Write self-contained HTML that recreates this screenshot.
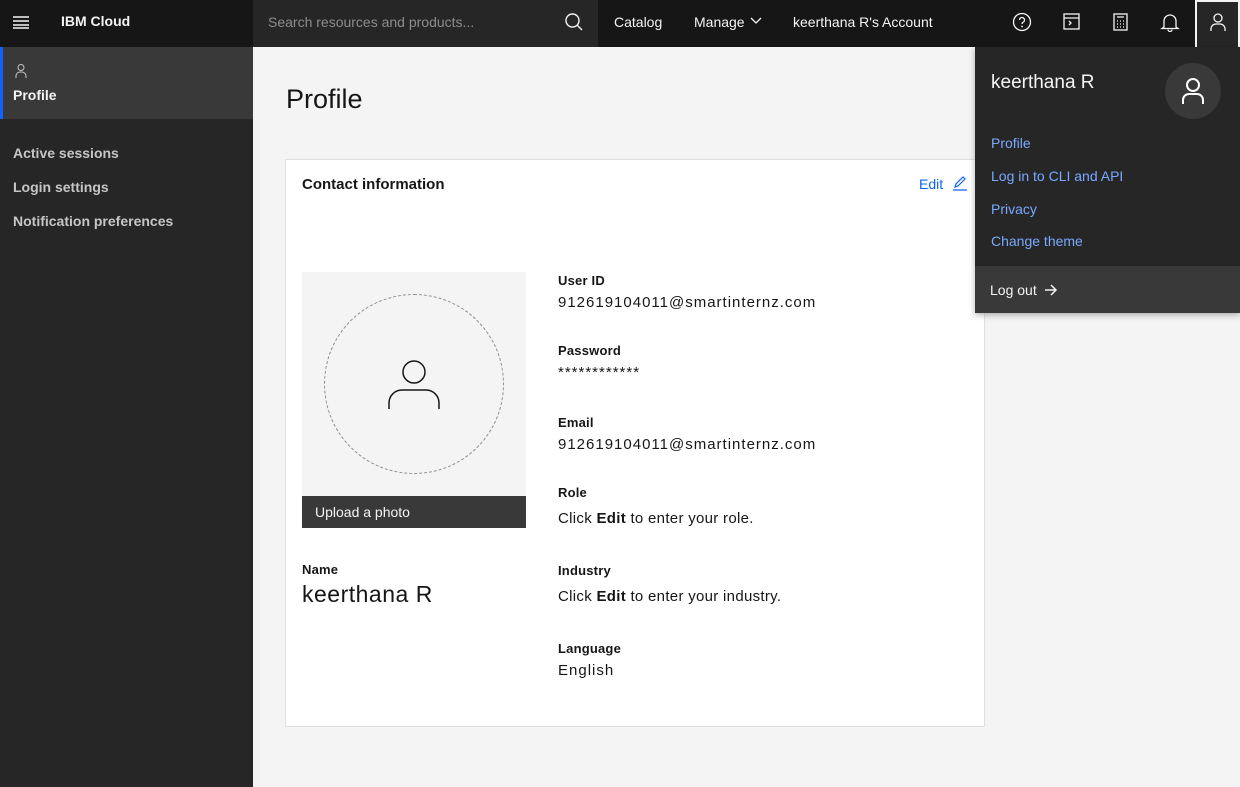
<!DOCTYPE html>
<html><head><meta charset="utf-8"><style>
*{margin:0;padding:0;box-sizing:border-box}
body{width:1240px;height:787px;overflow:hidden;font-family:"Liberation Sans",sans-serif;background:#f4f4f4;position:relative;color:#161616}
.a{position:absolute}
.hdr{left:0;top:0;width:1240px;height:47px;background:#161616}
.w{color:#f4f4f4;font-size:14px}
.side{left:0;top:47px;width:253px;height:740px;background:#262626}
.lbl{font-size:13px;font-weight:bold;color:#161616;letter-spacing:.2px}
.val{font-size:15px;color:#161616;letter-spacing:1px}
.lnk{color:#78a9ff;font-size:14px;left:991px}
</style></head><body>
<div class="a hdr"></div>
<svg class="a" style="left:12px;top:14px" width="18" height="16"><path d="M1 3h16M1 7h16M1 11h16M1 14h16" stroke="#f4f4f4" stroke-width="1.5"/></svg>
<div class="a w" style="left:61px;top:13px;font-weight:bold">IBM Cloud</div>
<div class="a" style="left:253px;top:0;width:345px;height:47px;background:#262626"></div>
<div class="a" style="left:268px;top:14px;color:#8d8d8d;font-size:14px">Search resources and products...</div>
<svg class="a" style="left:564px;top:12px" width="20" height="20"><circle cx="8.5" cy="8.5" r="6.5" stroke="#f4f4f4" fill="none" stroke-width="1.4"/><path d="M13 13l5 5" stroke="#f4f4f4" stroke-width="1.4"/></svg>
<div class="a w" style="left:614px;top:14px">Catalog</div>
<div class="a w" style="left:694px;top:14px">Manage</div>
<svg class="a" style="left:750px;top:17px" width="12" height="8"><path d="M1 1l5 5 5-5" stroke="#f4f4f4" fill="none" stroke-width="1.3"/></svg>
<div class="a w" style="left:793px;top:14px">keerthana R's Account</div>
<svg class="a" style="left:1012px;top:12px" width="20" height="20"><circle cx="10" cy="10" r="8.5" stroke="#f4f4f4" fill="none" stroke-width="1.3"/><path d="M7.5 8a2.5 2.5 0 1 1 3.5 2.3c-.8.4-1 .9-1 1.7" stroke="#f4f4f4" fill="none" stroke-width="1.3"/><circle cx="10" cy="14.5" r=".9" fill="#f4f4f4"/></svg>
<svg class="a" style="left:1063px;top:13px" width="18" height="18"><rect x="1" y="1" width="15" height="15" stroke="#f4f4f4" fill="none" stroke-width="1.3"/><path d="M1 5h15M6 8l2 2-2 2" stroke="#f4f4f4" fill="none" stroke-width="1.3"/></svg>
<svg class="a" style="left:1113px;top:13px" width="16" height="18"><rect x="1" y="1" width="13" height="16" stroke="#f4f4f4" fill="none" stroke-width="1.3"/><path d="M4 4h7M4 8h1M7 8h1M10 8h1M4 11h1M7 11h1M10 11h1M4 14h1M7 14h1M10 14h1" stroke="#f4f4f4" stroke-width="1.2"/></svg>
<svg class="a" style="left:1160px;top:12px" width="20" height="20"><path d="M4 15V9a6 6 0 0 1 12 0v6l2 1.5H2z M8 17.5a2 2 0 0 0 4 0" stroke="#f4f4f4" fill="none" stroke-width="1.3"/></svg>
<div class="a" style="left:1195px;top:0;width:45px;height:47px;background:#262626;border:2px solid #f4f4f4;border-bottom:none"></div>
<svg class="a" style="left:1209px;top:12px" width="18" height="20"><circle cx="9" cy="6" r="4" stroke="#f4f4f4" fill="none" stroke-width="1.3"/><path d="M2 19v-2a5 5 0 0 1 5-5h4a5 5 0 0 1 5 5v2" stroke="#f4f4f4" fill="none" stroke-width="1.3"/></svg>

<div class="a side"></div>
<div class="a" style="left:0;top:47px;width:253px;height:72px;background:#393939;border-left:3px solid #0f62fe"></div>
<svg class="a" style="left:14px;top:63px" width="14" height="16"><circle cx="7" cy="4.5" r="3" stroke="#c6c6c6" fill="none" stroke-width="1"/><path d="M2 15v-2a4 4 0 0 1 4-4h2a4 4 0 0 1 4 4v2" stroke="#c6c6c6" fill="none"/></svg>
<div class="a w" style="left:13px;top:87px;font-weight:bold">Profile</div>
<div class="a" style="left:13px;top:145px;color:#c6c6c6;font-size:14px;font-weight:bold">Active sessions</div>
<div class="a" style="left:13px;top:179px;color:#c6c6c6;font-size:14px;font-weight:bold">Login settings</div>
<div class="a" style="left:13px;top:213px;color:#c6c6c6;font-size:14px;font-weight:bold">Notification preferences</div>

<div class="a" style="left:286px;top:84px;font-size:27px;color:#161616">Profile</div>
<div class="a" style="left:285px;top:159px;width:700px;height:568px;background:#fff;border:1px solid #e0e0e0"></div>
<div class="a" style="left:302px;top:176px;font-size:15px;font-weight:bold">Contact information</div>
<div class="a" style="left:919px;top:176px;font-size:14px;color:#0f62fe">Edit</div>
<svg class="a" style="left:952px;top:175px" width="16" height="16"><path d="M3 12l1-3 7-7 2 2-7 7z M1 15h14" stroke="#0f62fe" fill="none" stroke-width="1.2"/></svg>
<div class="a" style="left:302px;top:272px;width:224px;height:224px;background:#f4f4f4"></div>
<div class="a" style="left:324px;top:294px;width:180px;height:180px;border:1.5px dashed #8d8d8d;border-radius:50%"></div>
<svg class="a" style="left:387px;top:357px" width="54" height="54"><circle cx="27" cy="15" r="11" stroke="#161616" fill="none" stroke-width="1.5"/><path d="M2 52v-6a13 13 0 0 1 13-13h24a13 13 0 0 1 13 13v6" stroke="#161616" fill="none" stroke-width="1.5"/></svg>
<div class="a" style="left:302px;top:496px;width:224px;height:32px;background:#393939"></div>
<div class="a w" style="left:315px;top:504px">Upload a photo</div>
<div class="a lbl" style="left:302px;top:562px">Name</div>
<div class="a" style="left:302px;top:581px;font-size:23px;letter-spacing:.5px">keerthana R</div>
<div class="a lbl" style="left:558px;top:273px">User ID</div>
<div class="a val" style="left:558px;top:294px">912619104011@smartinternz.com</div>
<div class="a lbl" style="left:558px;top:343px">Password</div>
<div class="a val" style="left:558px;top:364px">************</div>
<div class="a lbl" style="left:558px;top:415px">Email</div>
<div class="a val" style="left:558px;top:436px">912619104011@smartinternz.com</div>
<div class="a lbl" style="left:558px;top:485px">Role</div>
<div class="a val" style="left:558px;top:510px;letter-spacing:.3px">Click <b>Edit</b> to enter your role.</div>
<div class="a lbl" style="left:558px;top:563px">Industry</div>
<div class="a val" style="left:558px;top:588px;letter-spacing:.3px">Click <b>Edit</b> to enter your industry.</div>
<div class="a lbl" style="left:558px;top:641px">Language</div>
<div class="a val" style="left:558px;top:662px">English</div>

<div class="a" style="left:975px;top:47px;width:265px;height:266px;background:#262626;box-shadow:0 2px 6px rgba(0,0,0,.3)"></div>
<div class="a" style="left:991px;top:72px;font-size:19px;color:#f4f4f4">keerthana R</div>
<div class="a" style="left:1165px;top:63px;width:56px;height:56px;border-radius:50%;background:#393939"></div>
<svg class="a" style="left:1181px;top:77px" width="24" height="28"><circle cx="12" cy="8" r="6" stroke="#fff" fill="none" stroke-width="2"/><path d="M2 27v-4a6 6 0 0 1 6-6h8a6 6 0 0 1 6 6v4" stroke="#fff" fill="none" stroke-width="2"/></svg>
<div class="a lnk" style="top:135px">Profile</div>
<div class="a lnk" style="top:168px">Log in to CLI and API</div>
<div class="a lnk" style="top:201px">Privacy</div>
<div class="a lnk" style="top:233px">Change theme</div>
<div class="a" style="left:975px;top:266px;width:265px;height:47px;background:#393939"></div>
<div class="a w" style="left:990px;top:282px">Log out</div>
<svg class="a" style="left:1044px;top:283px" width="14" height="14"><path d="M1 7h11M7 2l5 5-5 5" stroke="#f4f4f4" fill="none" stroke-width="1.5"/></svg>
</body></html>
